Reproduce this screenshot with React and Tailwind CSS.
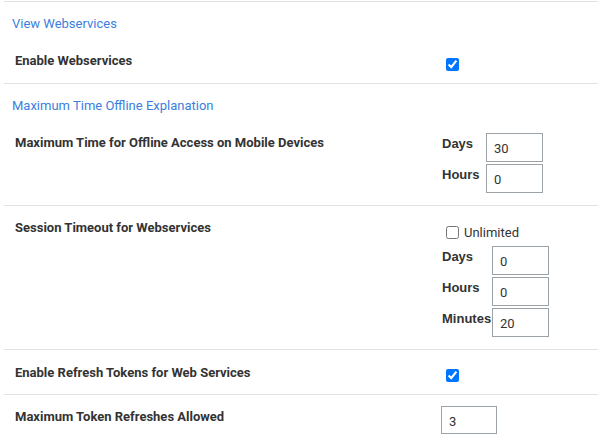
import React from "react";

const labelCls = "text-[13px] leading-[16px] font-bold text-[#333]";
const rLabel = "text-[13px] leading-[16px] font-bold text-[#333] [font-family:'Liberation_Sans',Arial,sans-serif]";
const inputCls =
  "w-[57px] h-[29px] border border-[#9ba3a9] bg-white pl-[7px] pt-[2px] text-[13px] text-[#333] outline-none [font-family:Roboto,sans-serif]";
const cb = "w-[13px] h-[13px] m-0 accent-[#0075ff] block";

function TimeTable({ rows, labelW }) {
  return (
    <div className="flex flex-col gap-[2px]">
      {rows.map(([l, v]) => (
        <div key={l} className="flex">
          <div className={`${rLabel} pt-[3px]`} style={{ width: labelW }}>{l}</div>
          <input className={inputCls} defaultValue={v} />
        </div>
      ))}
    </div>
  );
}

export default function App() {
  return (
    <div className="w-[598px] h-[443px] bg-white overflow-hidden [font-family:Roboto,'Liberation_Sans',sans-serif] pt-[1px]">
      <div className="ml-[4px]">
        {/* Section 1 */}
        <div className="border-t border-[#e1e4e4] pb-[12px]">
          <div className="pl-[8px] pt-[14px] text-[13px] leading-[16px] text-[#3b7fdd]">View Webservices</div>
          <div className="flex mt-[20px]">
            <div className={`w-[438px] pl-[11px] pt-[1px] ${labelCls}`}>Enable Webservices</div>
            <div className="pl-[4px] pt-[6px]">
              <input type="checkbox" defaultChecked className={cb} />
            </div>
          </div>
        </div>
        {/* Section 2 */}
        <div className="border-t border-[#e1e4e4] pb-[12px]">
          <div className="pl-[8px] pt-[14px] text-[13px] leading-[16px] text-[#3b7fdd]">Maximum Time Offline Explanation</div>
          <div className="flex mt-[19px]">
            <div className={`w-[438px] pl-[11px] pt-[2px] ${labelCls}`}>Maximum Time for Offline Access on Mobile Devices</div>
            <TimeTable rows={[["Days", "30"], ["Hours", "0"]]} labelW={44} />
          </div>
        </div>
        {/* Section 3 */}
        <div className="border-t border-[#e1e4e4] pt-[13px] pb-[12px] flex">
          <div className={`w-[438px] pl-[11px] pt-[1px] ${labelCls}`}>Session Timeout for Webservices</div>
          <div className="pt-[5px]">
            <div className="flex items-center h-[17px] pl-[4px] gap-[5px]">
              <input type="checkbox" className={cb} />
              <span className="text-[13px] text-[#333] leading-[16px] pt-[1px]">Unlimited</span>
            </div>
            <div className="mt-[5px]">
              <TimeTable rows={[["Days", "0"], ["Hours", "0"], ["Minutes", "20"]]} labelW={50} />
            </div>
          </div>
        </div>
        {/* Section 4 */}
        <div className="border-t border-[#e1e4e4] pt-[14px] pb-[12px] flex">
          <div className={`w-[438px] pl-[11px] pt-[1px] ${labelCls}`}>Enable Refresh Tokens for Web Services</div>
          <div className="pl-[4px] pt-[5px]">
            <input type="checkbox" defaultChecked className={cb} />
          </div>
        </div>
        {/* Section 5 */}
        <div className="border-t border-[#e1e4e4] pt-[11px] flex">
          <div className={`w-[437px] pl-[11px] pt-[3px] ${labelCls}`}>Maximum Token Refreshes Allowed</div>
          <input className={`${inputCls} !w-[56px] !h-[28px]`} defaultValue="3" />
        </div>
      </div>
    </div>
  );
}
